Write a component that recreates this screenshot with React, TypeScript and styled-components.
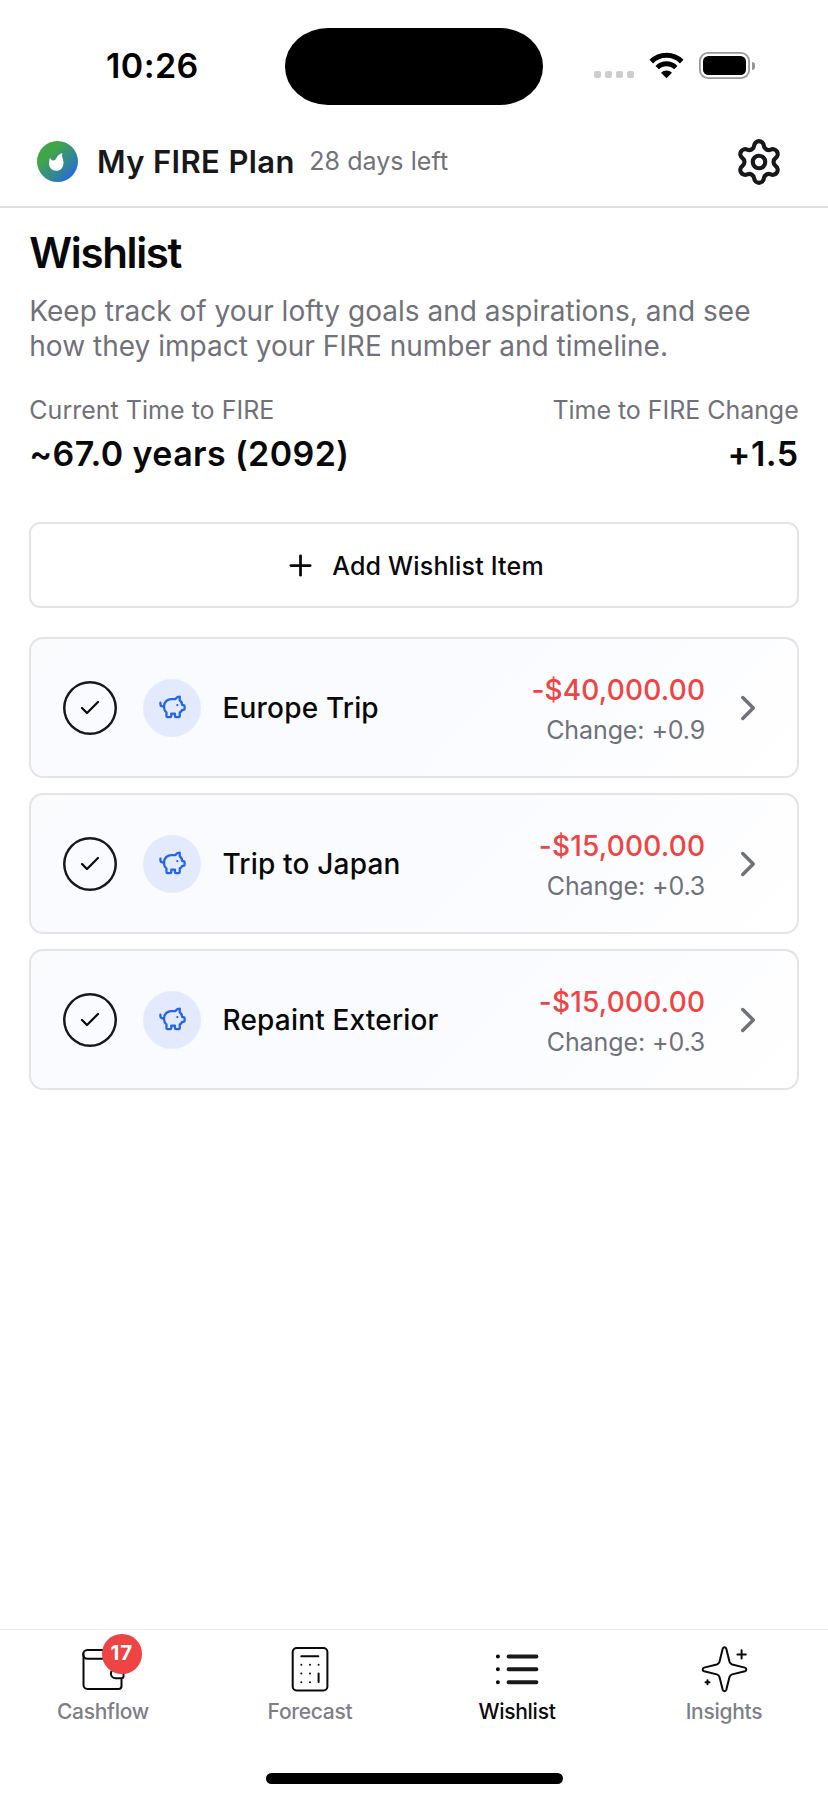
import React from "react";
import styled, { createGlobalStyle } from "styled-components";
import { Check, ChevronRight, PiggyBank, Plus, Settings } from "lucide-react";

const ink = "#09090b";
const muted = "#71717a";
const line = "#e4e4e7";
const red = "#ef4444";

const GlobalStyle = createGlobalStyle`
  * { box-sizing: border-box; }
  body {
    margin: 0;
    background: #fff;
    color: ${ink};
    font-family: Inter, "Liberation Sans", sans-serif;
  }
  h1, p { margin: 0; }
  svg { display: block; flex: none; }
`;

const Screen = styled.div`
  width: 828px;
  height: 1800px;
  display: flex;
  flex-direction: column;
  background: #fff;
  overflow: hidden;
`;

/* Status bar */
const StatusBar = styled.div`
  height: 117px;
  flex: none;
  display: grid;
  grid-template-columns: 285px 258px 285px;
  align-items: start;
  padding-top: 28px;
`;

const Clock = styled.div`
  padding: 18px 0 0 106px;
  font-size: 34px;
  line-height: 40px;
  font-weight: 600;
  letter-spacing: 0.42px;
  color: #000;
`;

const Island = styled.div`
  height: 76.5px;
  background: #000;
  border-radius: 43px / 38.25px;
`;

const StatusIcons = styled.div`
  display: flex;
  align-items: flex-start;
  padding: 24px 0 0 50.5px;
`;

const SignalDots = styled.div`
  display: flex;
  gap: 4px;
  padding-top: 19px;
  margin-right: 15px;
`;

const SignalDot = styled.span`
  width: 7px;
  height: 7px;
  border-radius: 2px;
  background: #cdcdcf;
`;

const Battery = styled.div`
  width: 51.5px;
  height: 27px;
  margin-left: 15px;
  padding: 4.2px;
  box-shadow: inset 0 0 0 1.8px #98989b;
  border-radius: 9px;
`;

const BatteryCharge = styled.div`
  height: 100%;
  border-radius: 5.5px;
  background: #000;
`;

const BatteryTip = styled.span`
  width: 3px;
  height: 8px;
  margin: 9.5px 0 0 1.5px;
  border-radius: 0 4px 4px 0;
  background: #98989b;
`;

/* Header */
const Header = styled.header`
  height: 91px;
  flex: none;
  display: flex;
  align-items: center;
  padding: 0 44px 0 37px;
  border-bottom: 2px solid #e0e0e3;
`;

const Logo = styled.div`
  width: 41px;
  height: 41px;
  border-radius: 50%;
  display: grid;
  place-items: center;
  background: linear-gradient(135deg, #3fa648 30%, #2f80a8 70%, #2563eb 92%);
`;

const PlanName = styled.div`
  margin-left: 19px;
  font-size: 31px;
  line-height: 40px;
  font-weight: 600;
  letter-spacing: 0.36px;
  color: #18181b;
`;

const Trial = styled.div`
  margin-left: 14.5px;
  font-size: 25px;
  line-height: 40px;
  letter-spacing: 0.06px;
  padding-bottom: 1px;
  color: ${muted};
`;

const SettingsButton = styled.div`
  margin-left: auto;
  color: #18181b;
`;

/* Content */
const Main = styled.main`
  flex: 1;
  padding: 20px 29.3px 0;
`;

const Title = styled.h1`
  font-size: 42px;
  line-height: 50px;
  font-weight: 600;
  letter-spacing: -1.35px;
`;

const Description = styled.p`
  margin-top: 16px;
  width: 740px;
  font-size: 28px;
  line-height: 35px;
  letter-spacing: 0.015px;
  color: ${muted};
`;

const Stats = styled.div`
  display: flex;
  justify-content: space-between;
  margin-top: 31px;
`;

const Stat = styled.div<{ $end?: boolean }>`
  text-align: ${(p) => (p.$end ? "right" : "left")};
`;

const StatLabel = styled.div<{ $tracking: number }>`
  font-size: 25px;
  line-height: 30px;
  letter-spacing: ${(p) => p.$tracking}px;
  color: ${muted};
`;

const StatValue = styled.div<{ $tracking: number }>`
  margin-top: 9px;
  font-size: 34px;
  line-height: 40px;
  font-weight: 600;
  letter-spacing: ${(p) => p.$tracking}px;
`;

const AddButton = styled.div`
  height: 86px;
  margin-top: 48px;
  display: flex;
  align-items: center;
  justify-content: center;
  gap: 15px;
  padding-top: 1px;
  border: 2px solid ${line};
  border-radius: 11px;
  font-size: 25px;
  font-weight: 500;
  letter-spacing: 0.18px;
`;

const Items = styled.div`
  display: flex;
  flex-direction: column;
  gap: 15px;
  margin-top: 29px;
`;

const ItemCard = styled.div`
  height: 141px;
  display: flex;
  align-items: center;
  padding: 0 28px 0 31.9px;
  border: 2px solid ${line};
  border-radius: 14px;
  background: linear-gradient(135deg, #fafbfd 0%, #fafbff 25%, #fbfcff 65%, #ffffff 100%);
`;

const CheckCircle = styled.div`
  width: 54px;
  height: 54px;
  display: grid;
  place-items: center;
  box-shadow: inset 0 0 0 2.5px #18181b;
  border-radius: 50%;
`;

const CategoryIcon = styled.div`
  width: 58px;
  height: 58px;
  margin-left: 26px;
  display: grid;
  place-items: center;
  border-radius: 50%;
  background: #e3eafd;
  color: #2563eb;
`;

const ItemName = styled.div`
  margin-left: 21.3px;
  font-size: 28px;
  line-height: 40px;
  font-weight: 500;
  letter-spacing: 0.18px;
`;

const ItemFigures = styled.div`
  margin: 4px 21.5px 0 auto;
  text-align: right;
`;

const Amount = styled.div`
  font-size: 28px;
  line-height: 40px;
  font-weight: 500;
  letter-spacing: 0.18px;
  color: ${red};
`;

const Change = styled.div`
  font-size: 25px;
  line-height: 40px;
  letter-spacing: -0.1px;
  color: ${muted};
`;

/* Tab bar */
const TabBar = styled.nav`
  height: 144px;
  flex: none;
  display: grid;
  grid-template-columns: repeat(4, 207px);
  align-items: start;
  border-top: 1px solid #e9e9eb;
`;

const Tab = styled.div`
  display: flex;
  flex-direction: column;
  align-items: center;
  padding: 15px 1px 0 0;
`;

const TabIcon = styled.div`
  position: relative;
  width: 48px;
  height: 48px;
`;

const TabLabel = styled.div<{ $active?: boolean }>`
  margin-top: 6px;
  font-size: 21px;
  line-height: 26px;
  font-weight: 500;
  letter-spacing: -0.28px;
  color: ${(p) => (p.$active ? ink : "#7f7f87")};
`;

const Badge = styled.span`
  position: absolute;
  top: -11px;
  left: 23px;
  width: 39.5px;
  height: 39.5px;
  display: flex;
  align-items: center;
  justify-content: center;
  border-radius: 50%;
  background: ${red};
  color: #fff;
  font-size: 20.5px;
  font-weight: 700;
  padding-bottom: 2px;
  letter-spacing: 0.8px;
`;

const HomeIndicator = styled.div`
  flex: none;
  width: 297px;
  height: 10.5px;
  margin: 0 auto 16.5px;
  border-radius: 6px;
  background: #000;
`;

const WifiIcon = () => (
  <svg width="35" height="27" viewBox="0 0 35 27">
    <path d="M2.3 9.6a21.6 21.6 0 0 1 30.4 0" fill="none" stroke="#000" strokeWidth="5" />
    <path d="M8.2 15.6a13.2 13.2 0 0 1 18.6 0" fill="none" stroke="#000" strokeWidth="4.8" />
    <path d="M17.5 26.2 12 20.8a8 8 0 0 1 11 0Z" fill="#000" />
  </svg>
);

const FlameIcon = () => (
  <svg width="41" height="41" viewBox="0 0 41 41">
    <path
      d="M25.3 12.3c-.4 2.5-.1 4.2.6 6 .4 1.1.6 2.1.6 3.600 0 4.700-3.100 7.900-7.200 7.900-4.300 0-7.300-3-7.300-7.200 0-2.200.3-4.200 1-6.100.5 1.700 1.500 2.800 2.900 3 1.500.2 2.500-.5 3.300-1.900 1.200-2.300 2.400-4.500 6.100-5.300Z"
      fill="#fff"
    />
  </svg>
);

const stroke = {
  fill: "none",
  stroke: ink,
  strokeWidth: 2,
  strokeLinecap: "round" as const,
  strokeLinejoin: "round" as const,
};

const WalletIcon = () => (
  <svg width="48" height="48" viewBox="0 0 48 48" {...stroke}>
    <path d="M39.5 14V8a3 3 0 0 0-3-3H8.5a4.3 4.3 0 0 0 0 8.7H39a3.5 3.5 0 0 1 3.5 3.5V24" />
    <path d="M4.5 9v31a4 4 0 0 0 4 4h31a3 3 0 0 0 3-3v-7.5" />
    <path d="M44.5 24H36.5a4.6 4.6 0 0 0 0 9.2h6a2 2 0 0 0 2-2Z" />
  </svg>
);

const CalculatorIcon = () => (
  <svg width="48" height="48" viewBox="0 0 48 48" {...stroke}>
    <rect x="6.7" y="3" width="34.7" height="42.5" rx="4" />
    <path d="M15.3 11.3h17" />
    <path d="M32.6 28.5v8.5" />
    <path d="M15.3 19.8h.01M24 19.8h.01M32.6 19.8h.01M15.3 28.5h.01M24 28.5h.01M15.3 37.2h.01M24 37.2h.01" />
  </svg>
);

const ListIcon = () => (
  <svg width="48" height="48" viewBox="0 0 48 48" {...stroke} strokeWidth={4}>
    <path d="M15.6 11.5h27.8M15.6 24.3h27.8M15.6 37.2h27.8" stroke="#18181b" />
    <path d="M4.9 11.5h.01M4.9 24.3h.01M4.9 37.2h.01" />
  </svg>
);

const SparklesIcon = () => (
  <svg width="48" height="48" viewBox="0 0 48 48" {...stroke}>
    <path d="M22.7 3.700c.6-1.900 3-1.900 3.600 0l3.200 13.100c.4 1.400 1.300 2.300 2.700 2.700l12.700 3.100c1.900.6 1.900 3 0 3.600l-12.700 3.200c-1.400.4-2.300 1.300-2.700 2.700l-3.200 12.700c-.6 1.800-3 1.800-3.600 0l-3.200-12.700c-.4-1.400-1.300-2.300-2.700-2.700L4.100 26.200c-1.900-.6-1.900-3 0-3.600l12.700-3.100c1.400-.4 2.300-1.300 2.700-2.700Z" />
    <path d="M41.6 5.2v8.4M37.4 9.4h8.4M7.5 35.2v4M5.5 37.2h4" />
  </svg>
);

const wishlist = [
  { name: "Europe Trip", amount: "-$40,000.00", change: "+0.9" },
  { name: "Trip to Japan", amount: "-$15,000.00", change: "+0.3" },
  { name: "Repaint Exterior", amount: "-$15,000.00", change: "+0.3" },
];

const tabs = [
  { label: "Cashflow", Icon: WalletIcon, badge: 17 },
  { label: "Forecast", Icon: CalculatorIcon },
  { label: "Wishlist", Icon: ListIcon, active: true },
  { label: "Insights", Icon: SparklesIcon },
];

export default function App() {
  return (
    <Screen>
      <GlobalStyle />
      <StatusBar>
        <Clock>10:26</Clock>
        <Island />
        <StatusIcons>
          <SignalDots>
            <SignalDot />
            <SignalDot />
            <SignalDot />
            <SignalDot />
          </SignalDots>
          <WifiIcon />
          <Battery>
            <BatteryCharge />
          </Battery>
          <BatteryTip />
        </StatusIcons>
      </StatusBar>

      <Header>
        <Logo>
          <FlameIcon />
        </Logo>
        <PlanName>My FIRE Plan</PlanName>
        <Trial>28 days left</Trial>
        <SettingsButton>
          <Settings size={50} strokeWidth={2} />
        </SettingsButton>
      </Header>

      <Main>
        <Title>Wishlist</Title>
        <Description>
          Keep track of your lofty goals and aspirations, and see how they
          impact your FIRE number and timeline.
        </Description>
        <Stats>
          <Stat>
            <StatLabel $tracking={0.02}>Current Time to FIRE</StatLabel>
            <StatValue $tracking={0.4}>~67.0 years (2092)</StatValue>
          </Stat>
          <Stat $end>
            <StatLabel $tracking={-0.04}>Time to FIRE Change</StatLabel>
            <StatValue $tracking={0.5}>+1.5</StatValue>
          </Stat>
        </Stats>
        <AddButton>
          <Plus size={33} strokeWidth={2} />
          Add Wishlist Item
        </AddButton>
        <Items>
          {wishlist.map((item) => (
            <ItemCard key={item.name}>
              <CheckCircle>
                <Check size={24} strokeWidth={2.2} />
              </CheckCircle>
              <CategoryIcon>
                <PiggyBank size={29} strokeWidth={1.9} />
              </CategoryIcon>
              <ItemName>{item.name}</ItemName>
              <ItemFigures>
                <Amount>{item.amount}</Amount>
                <Change>Change: {item.change}</Change>
              </ItemFigures>
              <ChevronRight size={42} strokeWidth={2} color={muted} />
            </ItemCard>
          ))}
        </Items>
      </Main>

      <TabBar>
        {tabs.map(({ label, Icon, badge, active }) => (
          <Tab key={label}>
            <TabIcon>
              <Icon />
              {badge && <Badge>{badge}</Badge>}
            </TabIcon>
            <TabLabel $active={active}>{label}</TabLabel>
          </Tab>
        ))}
      </TabBar>
      <HomeIndicator />
    </Screen>
  );
}
